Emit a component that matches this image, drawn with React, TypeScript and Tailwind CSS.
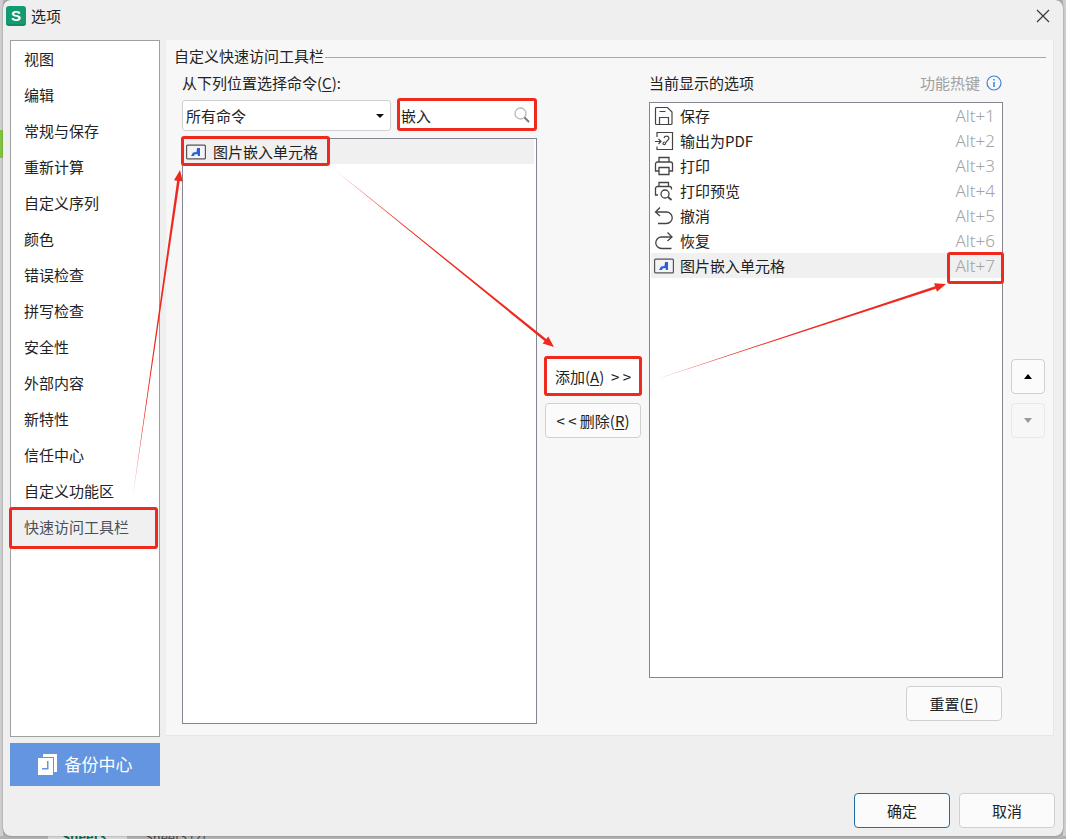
import type { ReactNode } from 'react';

const CJK = 'font-["Noto_Sans_CJK_SC","Noto_Sans",sans-serif]';

const sideItems = [
  '视图', '编辑', '常规与保存', '重新计算', '自定义序列', '颜色', '错误检查',
  '拼写检查', '安全性', '外部内容', '新特性', '信任中心', '自定义功能区',
];

const SaveIcon = () => (
  <svg width="20" height="20" viewBox="0 0 20 20" fill="none" stroke="#444" strokeWidth="1.2">
    <path d="M1.5 2.5a1 1 0 0 1 1-1h11l4.5 4.5v11.500a1 1 0 0 1-1 1h-14.500a1 1 0 0 1-1-1z" />
    <path d="M5.500 18.500v-7h9v7M5.500 5.500h6" />
  </svg>
);
const PdfIcon = () => (
  <svg width="20" height="20" viewBox="0 0 20 20" fill="none" stroke="#444" strokeWidth="1.200">
    <path d="M3 6v-4.500h15.500v17h-15.500v-3" />
    <path d="M1 10.500h5.500M4.500 8l2.500 2.500-2.500 2.500" />
    <path d="M10 7a2.600 2.600 0 0 1 5 0c0 2.500-3.500 3-3.500 5.500 0 1.500-2.500 1.500-2.500 0 0-1 1-1.500 2-1.500" />
  </svg>
);
const PrintIcon = () => (
  <svg width="20" height="20" viewBox="0 0 20 20" fill="none" stroke="#444" strokeWidth="1.300">
    <path d="M5 6v-4.500h10v4.500" />
    <path d="M5 15h-3.500v-7a2 2 0 0 1 2-2h13a2 2 0 0 1 2 2v7h-3.500" />
    <path d="M5 11.500h10v7h-10z" />
  </svg>
);
const PreviewIcon = () => (
  <svg width="20" height="20" viewBox="0 0 20 20" fill="none" stroke="#444" strokeWidth="1.300">
    <path d="M5 5.500v-4h9.500v4" />
    <path d="M4 14h-2.500v-6.500a2 2 0 0 1 2-2h12a2 2 0 0 1 2 2v1" />
    <circle cx="11" cy="13" r="4" />
    <path d="M14 16l3.500 3" strokeWidth="1.800" />
  </svg>
);
const UndoIcon = () => (
  <svg width="20" height="20" viewBox="0 0 20 20" fill="none" stroke="#444" strokeWidth="1.300">
    <path d="M6 1.500l-4.500 4.500 4.500 4" />
    <path d="M2 6h10.500a5.500 5.500 0 0 1 0 11.500h-8.500" />
  </svg>
);
const RedoIcon = () => (
  <svg width="20" height="20" viewBox="0 0 20 20" fill="none" stroke="#444" strokeWidth="1.300">
    <path d="M13.500 1.500l4.500 4.500-4.500 4" />
    <path d="M18 6h-10.500a5.500 5.500 0 0 0 0 11.500h10" />
  </svg>
);
const EmbedIcon = () => (
  <svg width="20" height="16" viewBox="0 0 20 16" fill="none">
    <rect x="0.600" y="1.100" width="18.800" height="13.800" rx="1" fill="#f4f4f6" stroke="#555" strokeWidth="1.200" />
    <path d="M5 12l2-3.500 3.500-.5.500-4h3v8h-2l-.5-2-3 .5-.5 1.500z" fill="#2f5fd0" />
  </svg>
);

const rows: { icon: ReactNode; label: string; hotkey: string }[] = [
  { icon: <SaveIcon />, label: '保存', hotkey: 'Alt+1' },
  { icon: <PdfIcon />, label: '输出为PDF', hotkey: 'Alt+2' },
  { icon: <PrintIcon />, label: '打印', hotkey: 'Alt+3' },
  { icon: <PreviewIcon />, label: '打印预览', hotkey: 'Alt+4' },
  { icon: <UndoIcon />, label: '撤消', hotkey: 'Alt+5' },
  { icon: <RedoIcon />, label: '恢复', hotkey: 'Alt+6' },
  { icon: <EmbedIcon />, label: '图片嵌入单元格', hotkey: 'Alt+7' },
];

const Key = ({ children }: { children: string }) => <span className="underline underline-offset-2">{children}</span>;

// tapered annotation arrow: thin tail, wide near the head
const Arrow = ({ x1, y1, x2, y2 }: { x1: number; y1: number; x2: number; y2: number }) => {
  const len = Math.hypot(x2 - x1, y2 - y1);
  const ux = (x2 - x1) / len;
  const uy = (y2 - y1) / len;
  const px = -uy;
  const py = ux;
  const bx = x2 - ux * 11;
  const by = y2 - uy * 11;
  const pts = [
    [x1, y1],
    [bx + px * 1.3, by + py * 1.3],
    [bx + px * 4.5, by + py * 4.5],
    [x2, y2],
    [bx - px * 4.5, by - py * 4.5],
    [bx - px * 1.3, by - py * 1.3],
  ];
  return <polygon points={pts.map((p) => p.join(',')).join(' ')} fill="#ee2a20" />;
};

const Mark = ({ className }: { className: string }) => (
  <div className={`absolute rounded-[3px] border-[3px] border-[#ee2a1e] ${className}`} />
);

export default function App() {
  return (
    <div className={`relative h-[839px] w-[1066px] overflow-hidden bg-[#b4b2b0] ${CJK} text-[15px] leading-none text-[#222]`}>
      {/* sheet peeking out behind the dialog */}
      <div className="absolute left-0 top-0 h-[836px] w-[3px] bg-[#cfcfcf]" />
      <div className="absolute right-0 top-0 h-[836px] w-[3px] bg-[#cfcfcf]" />
      <div className="absolute left-0 top-[130px] h-[28px] w-[3px] bg-[#86c440]" />
      <div className="absolute bottom-0 left-[48px] h-[3px] w-[79px] bg-[#d8d8d8]" />
      <div className="absolute bottom-0 left-[62px] text-[13px] font-bold leading-[5px] text-[#0c6b58]">Sheet3</div>
      <div className="absolute bottom-0 left-[145px] text-[13px] leading-[5px] text-[#444]">Sheet3 (2)</div>

      <div className="relative ml-[3px] flex h-[836px] w-[1060px] flex-col rounded-lg bg-[#efefef] shadow-[0_0_2px_rgba(0,0,0,0.4)]">
        {/* title bar */}
        <div className="flex h-[32px] items-center pl-[3px] pr-[13px]">
          <div className="flex h-[20px] w-[20px] items-center justify-center rounded-[3px] border-b-2 border-[#0f8a62] bg-[#149a70] font-['Liberation_Sans'] text-[15px] font-bold text-white">S</div>
          <span className="ml-[5px] pb-[2px] text-[15px]">选项</span>
          <svg className="ml-auto" width="14" height="14" viewBox="0 0 14 14" stroke="#333" strokeWidth="1.100">
            <path d="M1 1l12 12M13 1l-12 12" />
          </svg>
        </div>

        <div className="mt-[8px] flex pl-[7px] pr-[9px]">
          {/* left nav */}
          <div className="w-[150px] shrink-0">
            <div className="h-[697px] border border-[#a0a0a0] bg-white pt-[1px]">
              {sideItems.map((item) => (
                <div key={item} className="flex h-[36px] items-center pb-[4px] pl-[13px]">{item}</div>
              ))}
              <div className="flex h-[36px] items-center bg-[#f0f0f0] pb-[4px] pl-[13px] text-[#4a4f58]">快速访问工具栏</div>
            </div>
            <div className="mt-[6px] flex h-[43px] items-center justify-center gap-[8px] bg-[#6495e0] text-[17px] text-white">
              <svg width="19" height="21" viewBox="0 0 19 21" fill="white">
                <path d="M5 0h14v18h-3v-15h-11z" />
                <path d="M0 4h15v17h-15zM9 7v7h-5v1.500h6.500v-8.500z" fillRule="evenodd" />
              </svg>
              <span className="pb-[2px]">备份中心</span>
            </div>
          </div>

          {/* main panel */}
          <div className="ml-[6px] h-[696px] flex-1 border-b border-r border-[#e6e6e6] bg-[#f7f7f7] pl-[8px] pr-[7px] pt-[8px]">
            <div className="flex items-center">
              <span>自定义快速访问工具栏</span>
              <div className="ml-[1px] mt-[4px] h-px flex-1 bg-[#a8a8a8]" />
            </div>

            <div className="mt-[12px] flex pl-[8px]">
              {/* commands */}
              <div className="w-[355px] shrink-0">
                <div className="h-[15px]">从下列位置选择命令(<Key>C</Key>):</div>
                <div className="mt-[8px] flex h-[33px] items-end gap-[6px]">
                  <div className="flex h-[31px] w-[209px] items-center justify-between rounded-[3px] border border-[#d0d0d0] bg-white pl-[3px] pr-[6px]">
                    <span className="pb-[1px]">所有命令</span>
                    <svg width="8" height="4" viewBox="0 0 8 4"><path d="M0 0h8l-4 4z" fill="#111" /></svg>
                  </div>
                  <div className="flex h-[33px] flex-1 items-center justify-between bg-white pl-[4px] pr-[7px]">
                    <span className="pt-[1px]">嵌入</span>
                    <svg width="16" height="16" viewBox="0 0 16 16" fill="none">
                      <circle cx="6.500" cy="6.500" r="5.500" stroke="#b8b8b8" strokeWidth="1.300" />
                      <path d="M10.500 10.500l4.500 4.500" stroke="#777" strokeWidth="2" />
                    </svg>
                  </div>
                </div>
                <div className="mt-[7px] h-[586px] border border-[#85858f] bg-white pr-[2px]">
                  <div className="flex h-[25px] items-center gap-[7px] bg-[#f0f0f0] pl-[3px]">
                    <EmbedIcon />
                    图片嵌入单元格
                  </div>
                </div>
              </div>

              {/* add / remove */}
              <div className="ml-[8px] w-[96px] shrink-0 pt-[282px]">
                <div className="flex h-[39px] items-center justify-center whitespace-pre rounded-[3px] bg-white">添加(<Key>A</Key>)  &gt; &gt;</div>
                <div className="mt-[7px] flex h-[35px] items-center justify-center whitespace-pre rounded-[4px] border border-[#d0d0d0] bg-[#fbfbfb]">&lt; &lt; 删除(<Key>R</Key>)</div>
              </div>

              {/* current */}
              <div className="ml-[8px] w-[354px] shrink-0">
                <div className="flex h-[15px] items-center justify-between">
                  当前显示的选项
                  <div className="flex items-center gap-[6px] pr-[1px] text-[#a0a0a0]">
                    功能热键
                    <svg width="16" height="16" viewBox="0 0 16 16" fill="none">
                      <circle cx="8" cy="8" r="7" stroke="#3d82d8" strokeWidth="1.200" />
                      <path d="M8 7v5M8 4v1.500" stroke="#3d82d8" strokeWidth="1.500" />
                    </svg>
                  </div>
                </div>
                <div className="mt-[12px] h-[576px] border border-[#85858f] bg-white pl-[1px] pr-[1px]">
                  {rows.map((row, i) => (
                    <div key={row.label} className={`flex h-[25px] items-center pl-[3px] pr-[6px] ${i === 6 ? 'bg-[#f0f0f0]' : ''}`}>
                      <span className="flex w-[20px] justify-center">{row.icon}</span>
                      <span className="ml-[6px]">{row.label}</span>
                      <span className="ml-auto font-['Noto_Sans'] text-[17px] font-light text-[#a3a3a3]">{row.hotkey}</span>
                    </div>
                  ))}
                </div>
                <div className="mt-[8px] flex justify-end pr-[1px]">
                  <div className="flex h-[35px] w-[96px] items-center justify-center rounded-[4px] border border-[#d0d0d0] bg-[#fbfbfb]">重置(<Key>E</Key>)</div>
                </div>
              </div>

              {/* move up / down */}
              <div className="ml-[8px] w-[34px] shrink-0 pt-[284px]">
                <div className="flex h-[35px] items-center justify-center rounded-[4px] border border-[#d0d0d0] bg-[#fbfbfb]">
                  <svg width="8" height="5" viewBox="0 0 8 5"><path d="M4 0l4 5h-8z" fill="#000" /></svg>
                </div>
                <div className="mt-[9px] flex h-[35px] items-center justify-center rounded-[4px] border border-[#e8e8e8]">
                  <svg width="8" height="5" viewBox="0 0 8 5"><path d="M4 5l4-5h-8z" fill="#999" /></svg>
                </div>
              </div>
            </div>
          </div>
        </div>

        {/* footer */}
        <div className="mt-auto flex justify-end gap-[9px] pb-[8px] pr-[8px]">
          <div className="flex h-[35px] w-[96px] items-center justify-center rounded-[4px] border border-[#1f6fa8] bg-[#fbfbfb]">确定</div>
          <div className="flex h-[35px] w-[96px] items-center justify-center rounded-[4px] border border-[#d0d0d0] bg-[#fbfbfb]">取消</div>
        </div>
      </div>

      {/* red annotations over the dialog */}
      <Mark className="left-[9px] top-[507px] h-[42px] w-[149px]" />
      <Mark className="left-[181px] top-[136px] h-[30px] w-[149px]" />
      <Mark className="left-[397px] top-[98px] h-[33px] w-[140px]" />
      <Mark className="left-[544px] top-[356px] h-[40px] w-[98px]" />
      <Mark className="left-[947px] top-[252px] h-[32px] w-[57px]" />
      <svg className="pointer-events-none absolute left-0 top-0" width="1066" height="839">
        <Arrow x1={133} y1={495} x2={180} y2={170} />
        <Arrow x1={335} y1={170} x2={554} y2={347} />
        <Arrow x1={657} y1={379} x2={946} y2={284} />
      </svg>
    </div>
  );
}
